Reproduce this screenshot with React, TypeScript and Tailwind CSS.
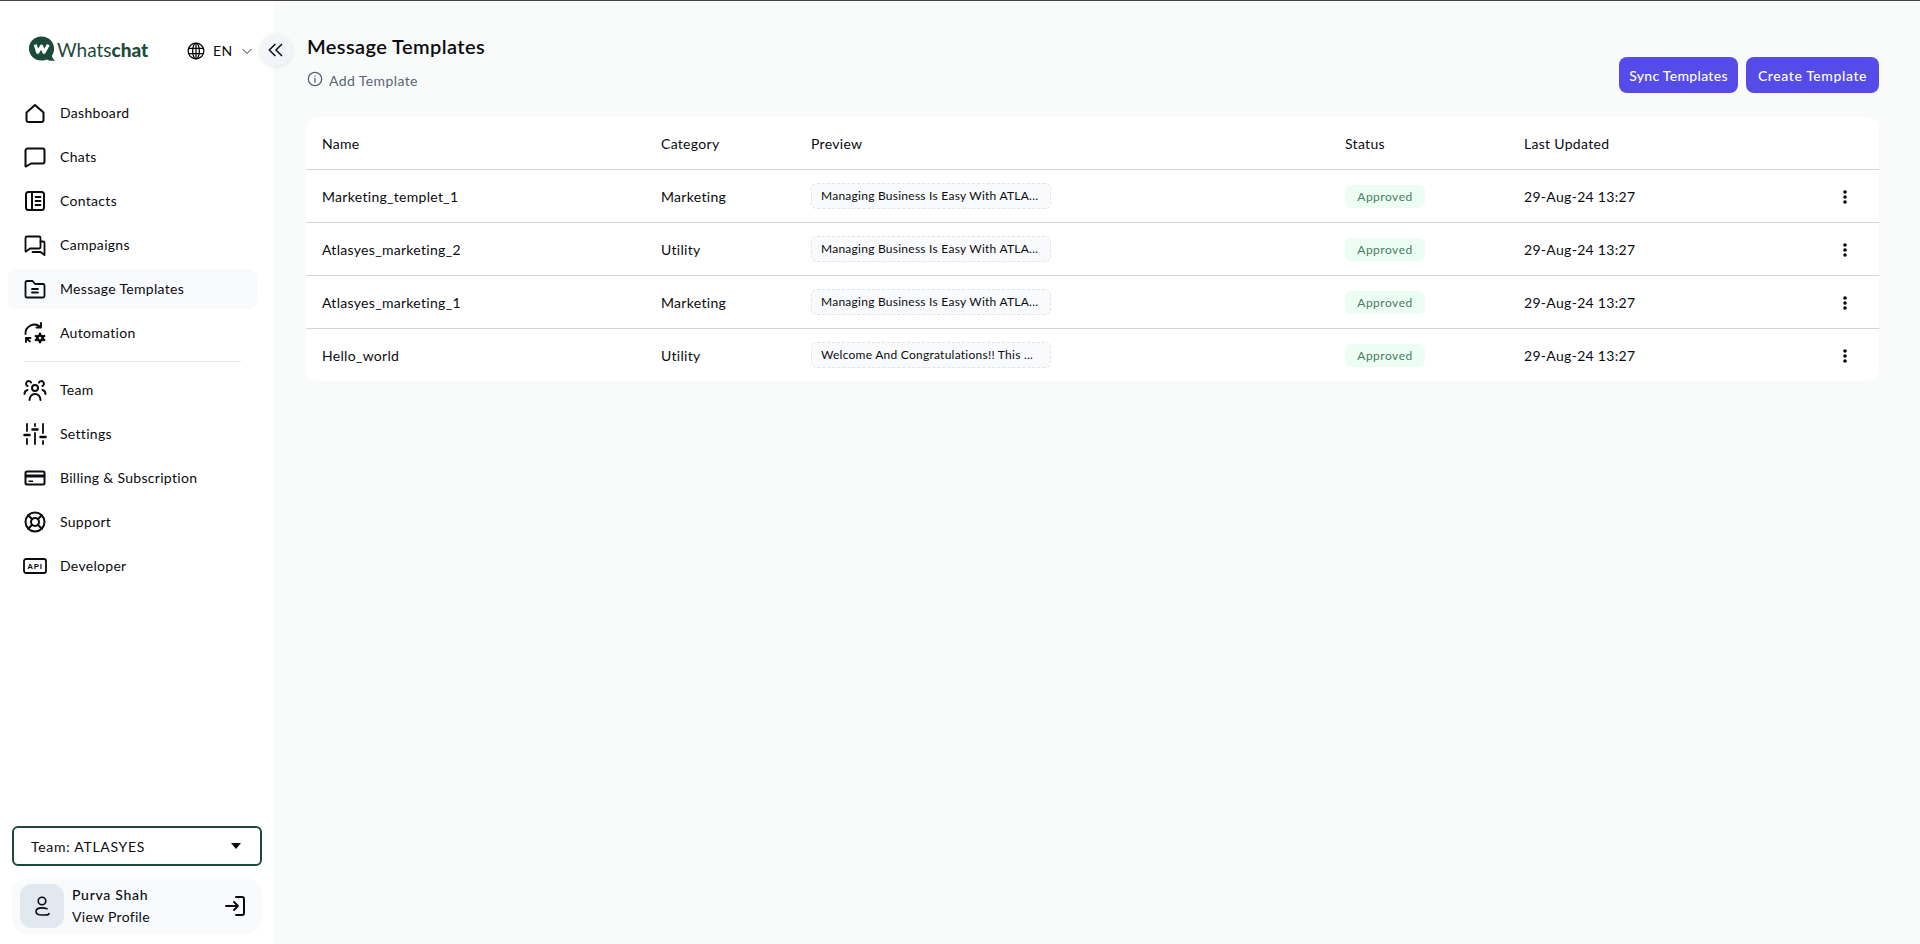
import React from "react";

const S = ({ children, w = 24, h = 24, vb = "0 0 24 24", sw = 2 }: any) => (
  <svg width={w} height={h} viewBox={vb} fill="none" stroke="#0b0b0f" strokeWidth={sw} strokeLinecap="round" strokeLinejoin="round" className="shrink-0">{children}</svg>
);

const nav1: [string, React.ReactNode][] = [
  ["Dashboard", <S><path d="M3.500 11.500 12 4l8.500 7.500V19a2 2 0 0 1-2 2h-13a2 2 0 0 1-2-2z" /></S>],
  ["Chats", <S><path d="M4.500 3.500h15a2 2 0 0 1 2 2v11a2 2 0 0 1-2 2H8L3 21.500a.4.4 0 0 1-.5-.4V5.500a2 2 0 0 1 2-2z" /></S>],
  ["Contacts", <S><rect x="3" y="3" width="18" height="18" rx="2.500" /><path d="M9 3v18" /><path d="M12.500 8h5M12.500 12h5M12.500 16h5" strokeWidth="1.800" /></S>],
  ["Campaigns", <S sw={1.8}><path d="M4 3.500h12a1.500 1.500 0 0 1 1.500 1.500v9a1.500 1.500 0 0 1-1.500 1.500H7L3 18.500a.3.3 0 0 1-.5-.2V5A1.500 1.500 0 0 1 4 3.500z" /><path d="M17.500 8.500H20A1.500 1.500 0 0 1 21.500 10v12l-4-3H9.500" /></S>],
  ["Message Templates", <S sw={1.8}><path d="M4 4h5.500l2.500 3h8a1.500 1.500 0 0 1 1.500 1.500V19a1.500 1.500 0 0 1-1.500 1.500H4A1.500 1.500 0 0 1 2.500 19V5.500A1.500 1.500 0 0 1 4 4z" /><path d="M9 12h6M9 15.500h6" /></S>],
  ["Automation", <S sw={1.9}><path d="M2.500 13A9 9 0 0 1 17 5.500M18 2v4.500h-4.500" /><path d="M3 21v-4h4.500M3.500 17.500 7 20.500" /><circle cx="17" cy="17" r="2.500" strokeWidth="2.600" /><path d="M17 12.500v1.500M17 20v1.500M12.700 15l1.300.8M20 18.200l1.300.8M12.700 19l1.300-.8M20 15.800l1.300-.8" strokeWidth="2.200" /></S>],
];
const nav2: [string, React.ReactNode][] = [
  ["Team", <S sw={2}><circle cx="12" cy="10" r="3" /><path d="M6.500 22c0-3.500 2.500-6 5.500-6s5.500 2.500 5.500 6" /><path d="M8 4.500A2.600 2.600 0 1 0 4.500 8M16 4.500A2.600 2.600 0 1 1 19.500 8M1.500 16c0-2 1-3.500 3-4M22.500 16c0-2-1-3.500-3-4" /></S>],
  ["Settings", <S sw={1.800}><path d="M4 2v7M4 17v5M12 2v2M12 11v11M20 2v9M20 19v3" /><path d="M1.500 13h5M9.500 7.500h5M17.500 15h5" strokeWidth="2.600" /></S>],
  ["Billing & Subscription", <svg width="24" height="24" viewBox="0 0 24 24" className="shrink-0"><path fillRule="evenodd" fill="#0b0b0f" d="M4 4.500h16A2.500 2.500 0 0 1 22.500 7v10a2.500 2.500 0 0 1-2.500 2.500H4A2.500 2.500 0 0 1 1.500 17V7A2.500 2.500 0 0 1 4 4.500zM3.500 7v1.500h17V7a.5.5 0 0 0-.5-.5H4a.5.5 0 0 0-.5.500zM3.500 11.500V17a.5.5 0 0 0 .5.500h16a.5.5 0 0 0 .5-.5v-5.500zM5.500 14.500h4.500V16H5.500z" /></svg>],
  ["Support", <S sw={2}><circle cx="12" cy="12" r="9.500" /><circle cx="12" cy="12" r="4" /><path d="m5.200 5.200 4 4M14.800 14.800l4 4M18.800 5.200l-4 4M9.200 14.800l-4 4" /></S>],
  ["Developer", <svg width="24" height="16" viewBox="0 0 24 16" className="shrink-0"><rect x="1" y="1" width="22" height="14" rx="2" fill="none" stroke="#0b0b0f" strokeWidth="1.800" /><text x="12" y="11.300" textAnchor="middle" fontFamily="'Liberation Sans',sans-serif" fontWeight="700" fontSize="8" letterSpacing="0.8" fill="#0b0b0f">API</text></svg>],
];

const NavItem = ({ label, icon, active }: { label: string; icon: React.ReactNode; active?: boolean }) => (
  <a className={`flex h-10 items-center rounded-lg pl-[15px] ${active ? "bg-[#f8fafc]" : ""}`}>
    <span className="flex w-[37px] shrink-0 items-center">{icon}</span>
    <span className="pb-[1px]">{label}</span>
  </a>
);

const rows = [
  ["Marketing_templet_1", "Marketing", "Managing Business Is Easy With ATLA..."],
  ["Atlasyes_marketing_2", "Utility", "Managing Business Is Easy With ATLA..."],
  ["Atlasyes_marketing_1", "Marketing", "Managing Business Is Easy With ATLA..."],
  ["Hello_world", "Utility", "Welcome And Congratulations!! This ..."],
];

const cols = "grid grid-cols-[339px_150px_534px_179px_1fr_60px] items-center pl-[16px]";

export default function App() {
  return (
    <div className="relative flex min-h-screen border-t border-[#444] bg-[#f9fbfb] text-[14px] tracking-[0.3px] text-[#0b0b0f] [font-family:Lato,'Noto_Sans',sans-serif]">
      <aside className="flex h-[943px] w-[274px] shrink-0 flex-col bg-white pl-2 pr-[17px]">
        <div className="flex h-[68px] items-end pb-[6px] pl-[20px]">
          <div className="flex w-[159px] items-center">
            <svg width="29" height="28" viewBox="0 0 30 28" className="shrink-0">
              <path fill="#1b4a3a" d="M14 1c7.500 0 13 5.500 13 12.500 0 3-.8 5.500-2.300 7.500.3 2 1.300 3.500 3.300 5-3.500.6-6.500 0-8.500-1.200-1.600.7-3.500 1.200-5.500 1.200C6.500 26 1 20.500 1 13.500S6.500 1 14 1z" />
              <path fill="none" stroke="#fff" strokeWidth="3.200" strokeLinejoin="round" d="M7.500 9.500l2.500 8 4-6.500 2.500 6.500 4.500-8" />
            </svg>
            <span className="text-[19px] leading-none tracking-normal text-[#1b4a3a]">Whats<b className="font-black">chat</b></span>
          </div>
          <div className="mb-[2px] flex items-center">
            <svg width="18" height="18" viewBox="0 0 24 24" fill="none" stroke="#0b0b0f" strokeWidth="1.700"><circle cx="12" cy="12" r="10.500" /><ellipse cx="12" cy="12" rx="4.500" ry="10.500" /><path d="M2 8.500h20M2 15.500h20M12 1.500v21" /></svg>
            <span className="ml-[8px]">EN</span>
            <svg width="12" height="12" viewBox="0 0 24 24" fill="none" stroke="#333" strokeWidth="2" className="ml-[9px]"><path d="m3 8 9 9 9-9" /></svg>
          </div>
        </div>
        <nav className="mt-[24px] flex flex-col gap-[4px]">
          {nav1.map(([l, i]) => <NavItem key={l} label={l} icon={i} active={l === "Message Templates"} />)}
          <div className="mx-4 mb-[4px] mt-[4px] border-t border-[#e5e7eb]" />
          <div className="flex flex-col gap-[4px]">
            {nav2.map(([l, i]) => <NavItem key={l} label={l} icon={i} />)}
          </div>
        </nav>
        <div className="-mr-[5px] mt-auto flex flex-col gap-3 pb-[10px] pl-1">
          <div className="flex h-10 items-center justify-between rounded-md border-2 border-[#1b4a3a] pl-[17px] pr-[18px]">
            <span className="tracking-[0.7px]">Team: ATLASYES</span>
            <svg width="12" height="8" viewBox="0 0 12 8"><path d="M1 1h10L6 7z" fill="#0b0b0f" /></svg>
          </div>
          <div className="flex h-14 items-center rounded-2xl bg-[#f8fafc] px-2">
            <div className="flex h-11 w-11 items-center justify-center rounded-xl bg-[#e2e8f0]">
              <svg width="22" height="24" viewBox="0 0 22 24" fill="none" stroke="#0b0b0f" strokeWidth="1.600" strokeLinecap="round"><circle cx="11" cy="7" r="3.800" /><path d="M16 14.800c-1.500-.6-3-.9-5-.9-4 0-6 1.600-6 3.500S7 21 11 21c4 0 7 .3 7-1.500" /></svg>
            </div>
            <div className="ml-[8px] flex flex-col gap-[4px] leading-[18px]">
              <span className="font-medium tracking-[0.7px]">Purva Shah</span>
              <span>View Profile</span>
            </div>
            <svg width="24" height="24" viewBox="0 0 24 24" fill="none" stroke="#0b0b0f" strokeWidth="2" strokeLinecap="round" strokeLinejoin="round" className="ml-auto mr-[7px]"><path d="M13 3h6a2 2 0 0 1 2 2v14a2 2 0 0 1-2 2h-6" /><path d="M3 12h12M11 8l4 4-4 4" /></svg>
          </div>
        </div>
      </aside>

      <button className="absolute left-[260px] top-[33px] flex h-8 w-8 items-center justify-center rounded-full bg-[#f1f5f9] shadow-[0_1px_4px_rgba(0,0,0,0.1)]">
        <svg width="16" height="16" viewBox="0 0 24 24" fill="none" stroke="#0b0b0f" strokeWidth="2.200"><path d="m11 3-9 9 9 9M21 3l-9 9 9 9" /></svg>
      </button>

      <main className="min-w-0 flex-1 pl-[32px] pr-[41px]">
        <div className="flex h-[116px] items-start justify-between">
          <div className="pl-[1px] pt-[33px]">
            <h1 className="text-[20px] font-semibold leading-6 tracking-[0.4px]">Message Templates</h1>
            <div className="mt-[12px] flex items-center text-[#5b6472]">
              <svg width="16" height="16" viewBox="0 0 24 24" fill="none" stroke="#5b6472" strokeWidth="2" strokeLinecap="round" className="mr-[6px] -translate-y-[2px]"><circle cx="12" cy="12" r="10" /><path d="M12 11v6M12 7.500v.01" /></svg>
              <span className="tracking-[0.4px]">Add Template</span>
            </div>
          </div>
          <div className="mt-[56px] flex gap-2 text-white">
            <button className="flex h-9 w-[119px] items-center justify-center rounded-lg bg-[#544be8] font-medium">Sync Templates</button>
            <button className="flex h-9 w-[133px] items-center justify-center rounded-lg bg-[#544be8] font-medium tracking-[0.6px]">Create Template</button>
          </div>
        </div>
        <div className="overflow-hidden rounded-xl bg-white">
          <div className={`${cols} h-[52px]`}>
            <span>Name</span><span>Category</span><span>Preview</span><span>Status</span><span>Last Updated</span><span />
          </div>
          {rows.map((r) => (
            <div key={r[0]} className={`${cols} h-[53px] border-t border-[#d1d5db]`}>
              <span>{r[0]}</span>
              <span>{r[1]}</span>
              <span className="flex h-[26px] w-[240px] items-center rounded-md border border-dashed border-[#e2e4ea] bg-[#f9fafb] pl-[9px] text-[12px] tracking-[0.25px]">{r[2]}</span>
              <span className="mt-[1px] flex h-[23px] w-[80px] items-center justify-center rounded-md bg-[#ecfdf3] text-[12px] tracking-[0.5px] text-[#4b7a62]">Approved</span>
              <span>29-Aug-24 13:27</span>
              <svg width="20" height="20" viewBox="0 0 20 20" fill="#0b0b0f" className="ml-[16px] mt-[1px]"><circle cx="10" cy="5" r="1.800" /><circle cx="10" cy="10" r="1.800" /><circle cx="10" cy="15" r="1.800" /></svg>
            </div>
          ))}
        </div>
      </main>
    </div>
  );
}
